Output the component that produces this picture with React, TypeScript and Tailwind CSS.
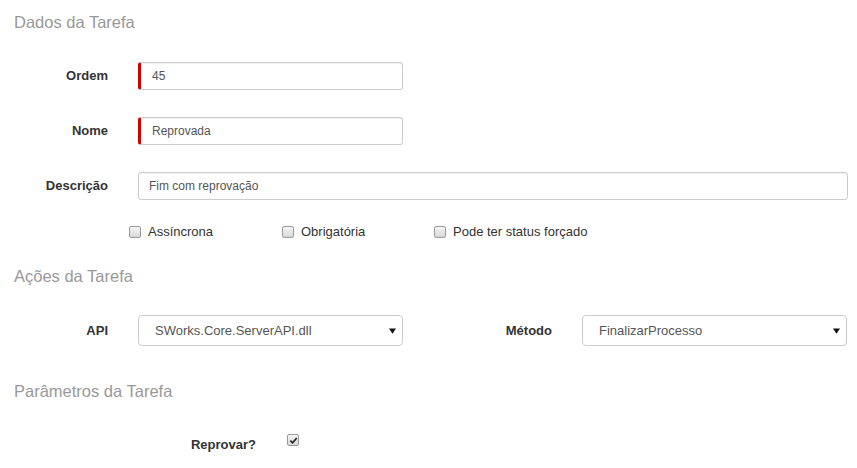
import React from 'react';

const font = { fontFamily: '"Liberation Sans", Arial, sans-serif' };

function Heading({ children, className = '' }: { children: React.ReactNode; className?: string }) {
  return <div className={`text-[16.5px] leading-[20px] text-[#999] ${className}`}>{children}</div>;
}

function Box({ checked = false }: { checked?: boolean }) {
  return (
    <span className="flex h-[12px] w-[12px] shrink-0 items-center justify-center rounded-[2px] border border-[#9a9a9a] bg-gradient-to-b from-[#f4f4f4] to-[#d8d8d8]">
      {checked && (
        <svg viewBox="0 0 10 10" className="h-[9px] w-[9px]">
          <path d="M1.5 5.2 L4 7.6 L8.6 2.2" fill="none" stroke="#222" strokeWidth="1.9" />
        </svg>
      )}
    </span>
  );
}

function Check({ label }: { label: string }) {
  return (
    <label className="flex items-center gap-[7px] text-[13px] text-[#333]">
      <Box />
      <span>{label}</span>
    </label>
  );
}

function Field({ label, value, required = false, wide = false }: { label: string; value: string; required?: boolean; wide?: boolean }) {
  return (
    <div className="flex items-center">
      <div className="w-[108px] shrink-0 text-right text-[13px] font-bold text-[#333]">{label}</div>
      <div
        className={`ml-[30px] flex h-[28px] shrink-0 items-center rounded-[3px] border border-[#ccc] bg-white text-[12px] text-[#555] shadow-[inset_0_1px_1px_rgba(0,0,0,0.06)] ${
          wide ? 'w-[710px] pl-[10px]' : 'w-[265px] pl-[10px]'
        } ${required ? 'border-l-[3px] border-l-[#d40000] pl-[11px]' : ''}`}
      >
        {value}
      </div>
    </div>
  );
}

function Select({ label, value }: { label: string; value: string }) {
  return (
    <div className="flex shrink-0 items-center">
      <div className="w-[108px] shrink-0 text-right text-[13px] font-bold text-[#333]">{label}</div>
      <div className="ml-[30px] flex h-[31px] w-[265px] shrink-0 items-center justify-between rounded-[4px] border border-[#ccc] bg-white pl-[16px] pr-[6px] text-[13px] text-[#555]">
        <span>{value}</span>
        <svg viewBox="0 0 8 6" className="h-[6px] w-[7px]">
          <path d="M0 0 H8 L4 6 Z" fill="#111" />
        </svg>
      </div>
    </div>
  );
}

export default function App() {
  return (
    <div className="min-h-screen overflow-hidden bg-white px-[14px]" style={font}>
      <Heading className="pt-[12px]">Dados da Tarefa</Heading>

      <div className="-mx-[14px] mt-[30px] flex flex-col gap-[27px]">
        <Field label="Ordem" value="45" required />
        <Field label="Nome" value="Reprovada" required />
        <Field label="Descrição" value="Fim com reprovação" wide />
      </div>

      <div className="mt-[22px] flex h-[20px] items-center pl-[115px]">
        <div className="w-[153px]"><Check label="Assíncrona" /></div>
        <div className="w-[152px]"><Check label="Obrigatória" /></div>
        <Check label="Pode ter status forçado" />
      </div>

      <Heading className="mt-[24px]">Ações da Tarefa</Heading>

      <div className="-mx-[14px] mt-[29px] flex gap-[41px]">
        <Select label="API" value="SWorks.Core.ServerAPI.dll" />
        <Select label="Método" value="FinalizarProcesso" />
      </div>

      <Heading className="mt-[35px]">Parâmetros da Tarefa</Heading>

      <div className="-mx-[14px] mt-[34px] flex items-start">
        <div className="w-[256px] shrink-0 text-right text-[13px] font-bold leading-[20px] text-[#333]">Reprovar?</div>
        <div className="ml-[31px] -mt-[1px] flex"><Box checked /></div>
      </div>
    </div>
  );
}
